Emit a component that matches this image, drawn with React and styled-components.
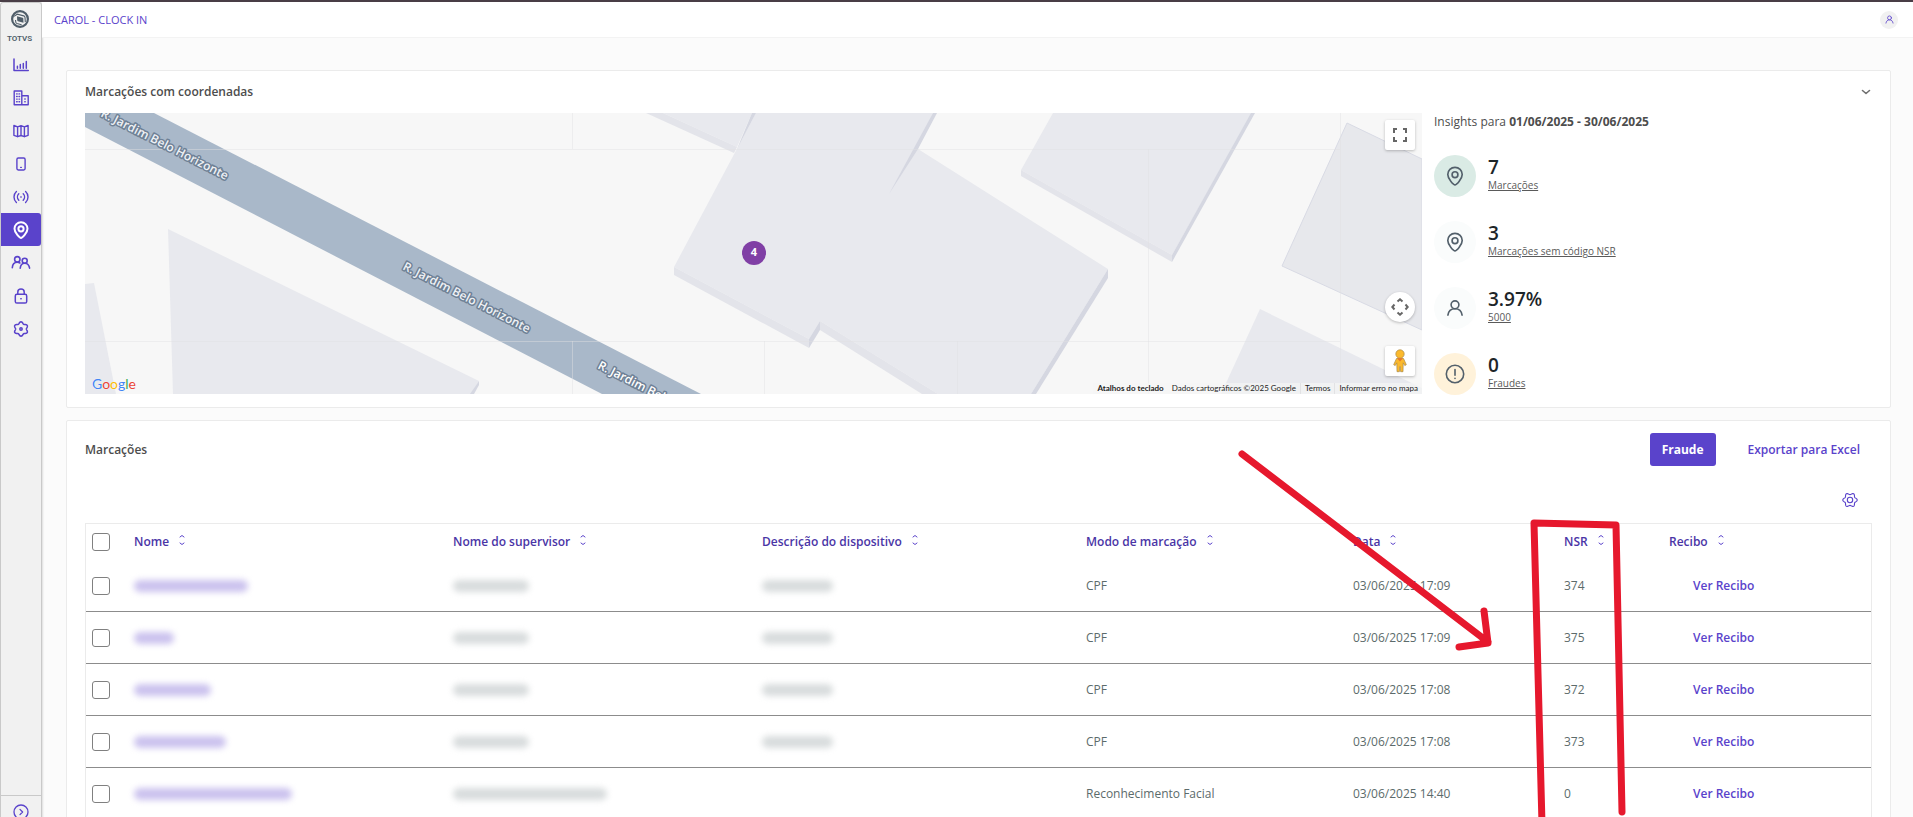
import React, { useState } from 'react'
import styled, { createGlobalStyle } from 'styled-components'

const GlobalStyle = createGlobalStyle`
  :root {
    --color-primary: #5a43cb;
    --color-primary-dark: #4a35a6;
    --color-text: #4d4d4d;
    --color-cell: #5c6b6b;
    --color-icon: #53606b;
    --color-border: #ebebeb;
  }
  * {
    box-sizing: border-box;
  }
  body {
    margin: 0;
    background: #fbfbfb;
    color: var(--color-text);
    font-family: 'Open Sans', 'Noto Sans', sans-serif;
    font-size: 12px;
    line-height: 16px;
    overflow: hidden;
  }
  button {
    font: inherit;
    padding: 0;
    border: 0;
    background: none;
    cursor: pointer;
  }
`

/* gear outline with six soft teeth */
const gearPath = (cx, cy, radius, depth, turn) => {
  const points = []
  for (let i = 0; i < 72; i++) {
    const a = (i / 72) * Math.PI * 2
    const r = radius + depth * Math.cos(6 * (a - turn))
    points.push(`${(cx + r * Math.cos(a)).toFixed(2)} ${(cy + r * Math.sin(a)).toFixed(2)}`)
  }
  return `M${points.join('L')}z`
}

const Icon = ({ size = 16, box = 16, stroke = 1.5, children }) => (
  <svg
    width={size}
    height={size}
    viewBox={`0 0 ${box} ${box}`}
    fill="none"
    stroke="currentColor"
    strokeWidth={stroke}
    strokeLinecap="round"
    strokeLinejoin="round"
    aria-hidden="true"
  >
    {children}
  </svg>
)

const ChartIcon = () => (
  <Icon>
    <path d="M1 2v11.500h14.300M4.400 9.200v2M7.300 7.600v3.600M10.300 6.600v4.600M13.300 4.400v6.800" />
  </Icon>
)

const CompanyIcon = () => (
  <Icon stroke={1.4}>
    <path d="M1.2 1h7.600v13.800H1.2zM8.800 5.800h6.400v9H8.800z" />
    <path d="M3.600 3.900h.6M6 3.900h.6M3.600 6.500h.6M6 6.500h.6M3.600 9.100h.6M6 9.100h.6M3.600 11.700h.6M6 11.700h.6M11.800 9h.4M11.800 11.800h.4" />
  </Icon>
)

const MapIcon = () => (
  <Icon stroke={1.4}>
    <path d="M.9 2.500 4.600 3.900 8 2.700l3.400 1.200 3.700-1.400v9.800l-3.700 1.400L8 12.500l-3.400 1.200-3.700-1.400zM4.600 3.900v9.800M8 2.700v9.800M11.400 3.900v9.800" />
  </Icon>
)

const DeviceIcon = () => (
  <Icon stroke={1.4}>
    <rect x="3.900" y="2" width="8.200" height="12" rx="1.400" />
    <path d="M7.700 11.400h.6" />
  </Icon>
)

const SignalIcon = () => (
  <Icon stroke={1.4}>
    <path d="M3.400 2.600C.2 5.600.2 10.400 3.400 13.400M12.600 2.600c3.200 3 3.200 7.800 0 10.800M5.800 4.800c-1.800 1.800-1.800 4.600 0 6.400M10.200 4.800c1.800 1.800 1.800 4.600 0 6.400M7.800 8h.4" />
  </Icon>
)

const PinIcon = ({ size = 18, stroke = 2 }) => (
  <Icon size={size} box={18} stroke={stroke}>
    <path d="M9 17c-1.100 0-6.500-5.200-6.500-9.300a6.500 6.500 0 0 1 13 0C15.500 11.800 10.100 17 9 17z" />
    <circle cx="9" cy="7.800" r="2.600" />
  </Icon>
)

const UsersIcon = () => (
  <Icon size={20} box={20} stroke={1.6}>
    <circle cx="6.300" cy="6.300" r="2.700" />
    <path d="M1.300 14.800c.2-3.500 2.200-5.600 5-5.600 1 0 1.900.3 2.600.8" />
    <circle cx="13.700" cy="7.800" r="2.500" />
    <path d="M9.200 15.200c.3-3.200 2.100-5 4.500-5s4.400 1.800 4.900 5" />
  </Icon>
)

const LockIcon = () => (
  <Icon>
    <rect x="2.300" y="6.300" width="11.400" height="8.700" rx="1.600" />
    <path d="M4.800 6.200V4a3.200 3 0 0 1 6.400 0v2.200M7.800 10.700h.4" />
  </Icon>
)

const GearIcon = ({ turn = 0, hole = 1.2, stroke = 1.5 }) => (
  <Icon stroke={stroke}>
    <path d={gearPath(8, 8, 6.3, 0.9, turn)} />
    <circle cx="8" cy="8" r={hole} />
  </Icon>
)

const UserIcon = ({ size = 18 }) => (
  <Icon size={size} box={18} stroke={1.6}>
    <circle cx="9" cy="5.800" r="3.900" />
    <path d="M1.900 16.200c.5-4 3.200-6.500 7.100-6.500s6.600 2.500 7.100 6.500" />
  </Icon>
)

const AlertIcon = () => (
  <Icon size={20} box={20} stroke={1.6}>
    <circle cx="10" cy="10" r="8.700" />
    <path d="M10 5.500v5.800M10 14.300v.1" />
  </Icon>
)

const ExpandIcon = () => (
  <Icon stroke={1.3}>
    <circle cx="8" cy="8" r="7" />
    <path d="m7 5.400 2.600 2.600L7 10.600" />
  </Icon>
)

const TotvsLogo = () => (
  <svg width="20" height="20" viewBox="0 0 20 20" aria-hidden="true">
    <circle cx="10" cy="10" r="7.900" fill="none" stroke="#4f5d69" strokeWidth="2.200" />
    <path d="m7 7.200 5.600 1.500c.4.100.7.400.7.900l.2 4.100-5.600-1.500c-.4-.1-.7-.4-.7-.9z" fill="#4f5d69" />
    <path d="M4 7.400 7.200 5.200l6.600 1.700c.7.200 1.100.7 1.200 1.400l.3 4.800" fill="none" stroke="#4f5d69" strokeWidth="1.100" />
    <path d="m5.500 11 .3 2.200c.1.700.5 1.100 1.200 1.300l4.600 1.200" fill="none" stroke="#4f5d69" strokeWidth="1.100" />
  </svg>
)

const menu = [
  { label: 'Dashboard', icon: <ChartIcon /> },
  { label: 'Empresas', icon: <CompanyIcon /> },
  { label: 'Locais', icon: <MapIcon /> },
  { label: 'Dispositivos', icon: <DeviceIcon /> },
  { label: 'Sinal', icon: <SignalIcon /> },
  { label: 'Marcações', icon: <PinIcon />, active: true },
  { label: 'Pessoas', icon: <UsersIcon /> },
  { label: 'Segurança', icon: <LockIcon /> },
  { label: 'Configurações', icon: <GearIcon turn={Math.PI / 6} /> },
]

const insights = [
  { value: '7', label: 'Marcações', icon: <PinIcon size={20} stroke={1.5} />, color: '#daebe5' },
  { value: '3', label: 'Marcações sem código NSR', icon: <PinIcon size={20} stroke={1.5} />, color: '#fafcfc' },
  { value: '3.97%', label: '5000', icon: <UserIcon />, color: '#fafcfc' },
  { value: '0', label: 'Fraudes', icon: <AlertIcon />, color: '#fff2da' },
]

/* widths share the table in proportion */
const columns = [
  { label: 'Nome', width: 319 },
  { label: 'Nome do supervisor', width: 309 },
  { label: 'Descrição do dispositivo', width: 324 },
  { label: 'Modo de marcação', width: 267 },
  { label: 'Data', width: 211 },
  { label: 'NSR', width: 105 },
  { label: 'Recibo', width: 210 },
]

/* name, supervisor and device are masked: only their length is kept */
const rows = [
  { id: 1, name: 114, supervisor: 76, device: 71, mode: 'CPF', date: '03/06/2025 17:09', nsr: 374 },
  { id: 2, name: 40, supervisor: 76, device: 71, mode: 'CPF', date: '03/06/2025 17:09', nsr: 375 },
  { id: 3, name: 77, supervisor: 76, device: 71, mode: 'CPF', date: '03/06/2025 17:08', nsr: 372 },
  { id: 4, name: 92, supervisor: 76, device: 71, mode: 'CPF', date: '03/06/2025 17:08', nsr: 373 },
  { id: 5, name: 158, supervisor: 154, device: 0, mode: 'Reconhecimento Facial', date: '03/06/2025 14:40', nsr: 0 },
]

const streets = [
  { x: 15, y: 3, fill: '#eef1f5' },
  { x: 317, y: 156, fill: '#eef1f5' },
  { x: 512, y: 255, fill: '#ffffff' },
]

const MapDrawing = () => (
  <MapSvg viewBox="0 0 1337 281" preserveAspectRatio="xMidYMid slice">
    <g fill="#e8e9ee">
      <path d="M0 171l9-1 22 111H0z" />
      <path d="M83 116 394 268l-8 13H88z" />
      <path d="M578 0h89l-15 34z" />
      <path d="M671 0h177l-15 36 190 120-77 125h-93L735 208l-11 18-135-72z" />
      <path d="M968 0h199l-80 142L936 57z" />
      <path d="M1175 196 1337 275v6h-201z" />
    </g>
    <path d="M1262 10l75 36v171l-140-64z" fill="#e7e8ec" stroke="#d8dae4" />
    <g fill="#e3e4ea">
      <path d="M561 0h17l74 34-3 6z" />
      <path d="M589 154l135 72v9l-135-73z" />
      <path d="M735 208l118 73h-16l-102-64z" />
      <path d="M936 57l151 85v7L936 63z" />
    </g>
    <g fill="#d5d7e1">
      <path d="M394 268v4l-5 9h-4z" />
      <path d="M667 0h4l-19 36z" />
      <path d="M848 0h4l-19 36-29 45z" />
      <path d="M724 226l11-18v9l-11 18z" />
      <path d="M1023 156v9l-72 116h-5z" />
      <path d="M1087 142v7l83-149h-4z" />
    </g>
    <path d="M0 0h69l547 281h-99L0 14z" fill="#a9b8c9" />
    <path
      d="M0 36.500h1255M0 228.500h1255M487.500 0v36M487.500 228v53M679.500 228v53M872.500 228v53M1063.500 36v245M1255.500 0v281"
      stroke="#dfe0e2"
      strokeOpacity="0.450"
      fill="none"
    />
    {streets.map(({ x, y, fill }) => (
      <StreetName key={x} transform={`translate(${x} ${y}) rotate(27)`} fill={fill}>
        R. Jardim Belo Horizonte
      </StreetName>
    ))}
    <circle cx="669" cy="140" r="12" fill="#803fa5" />
    <ClusterCount x="669" y="143">4</ClusterCount>
  </MapSvg>
)

const Pegman = () => (
  <svg width="14" height="24" viewBox="0 0 14 24" aria-hidden="true">
    <path
      d="M3.500 9.500h7l2.800 6.200-1.500.9-1.600-2.800-.2 8.900H7.600l-.3-5h-.6l-.3 5H4l-.2-8.900-1.600 2.800-1.500-.9z"
      fill="#fbb92c"
      stroke="#a98a4a"
      strokeWidth="0.700"
    />
    <circle cx="7" cy="5" r="4.200" fill="#fbb92c" stroke="#a98a4a" strokeWidth="0.700" />
    <path d="M4 9.300h6l-3 3.300z" fill="#e8762c" />
  </svg>
)

const SortIcon = () => (
  <Icon size={10} box={10} stroke={1}>
    <path d="m3 2 2-1.500L7 2M3 8l2 1.500L7 8" />
  </Icon>
)

const Sidebar = () => (
  <SidebarStyled>
    <div className="brand">
      <TotvsLogo />
      <span>TOTVS</span>
    </div>
    <nav>
      {menu.map(({ label, icon, active }) => (
        <MenuLink key={label} href="#" aria-label={label} $active={active}>
          {icon}
        </MenuLink>
      ))}
    </nav>
    <ToggleButton aria-label="Expandir menu">
      <ExpandIcon />
    </ToggleButton>
  </SidebarStyled>
)

const CoordinatesCard = () => (
  <Card>
    <CardHeader>
      <h2>Marcações com coordenadas</h2>
      <ChevronButton aria-label="Recolher">
        <Icon size={12} box={12} stroke={1.6}>
          <path d="m2.500 4.500 3.500 3 3.500-3" />
        </Icon>
      </ChevronButton>
    </CardHeader>
    <CardContent>
      <MapStyled>
        <MapDrawing />
        <MapControls>
          <MapButton className="fullscreen" aria-label="Tela cheia">
            <svg width="14" height="14" viewBox="0 0 14 14" fill="none" stroke="#666" strokeWidth="2">
              <path d="M1 5V1h3M10 1h3v4M13 9v4h-3M4 13H1V9" />
            </svg>
          </MapButton>
          <MapButton $round aria-label="Controles da câmera">
            <svg width="18" height="18" viewBox="0 0 18 18" fill="none" stroke="#666" strokeWidth="2">
              <path d="M6.500 3.500 9 1.300l2.500 2.200M6.500 14.500 9 16.700l2.500-2.200M3.500 6.500 1.300 9l2.200 2.500M14.500 6.500 16.700 9l-2.200 2.500" />
            </svg>
          </MapButton>
          <MapButton aria-label="Street View">
            <Pegman />
          </MapButton>
        </MapControls>
        <GoogleLogo href="#" aria-label="Google">
          <span>G</span><span>o</span><span>o</span><span>g</span><span>l</span><span>e</span>
        </GoogleLogo>
        <Attribution>
          <button>Atalhos do teclado</button>
          <span>Dados cartográficos ©2025 Google</span>
          <a href="#">Termos</a>
          <a href="#">Informar erro no mapa</a>
        </Attribution>
      </MapStyled>
      <InsightsStyled>
        <p>Insights para <b>01/06/2025 - 30/06/2025</b></p>
        {insights.map(({ value, label, icon, color }) => (
          <Insight key={label}>
            <InsightIcon $color={color}>{icon}</InsightIcon>
            <div>
              <strong>{value}</strong>
              <a href="#">{label}</a>
            </div>
          </Insight>
        ))}
      </InsightsStyled>
    </CardContent>
  </Card>
)

const RecordsCard = () => {
  const [selected, setSelected] = useState([])

  const toggle = (id) => {
    setSelected(selected.includes(id) ? selected.filter((item) => item !== id) : [...selected, id])
  }

  const toggleAll = () => {
    setSelected(selected.length === rows.length ? [] : rows.map((row) => row.id))
  }

  return (
    <Card>
      <Toolbar>
        <h2>Marcações</h2>
        <PrimaryButton>Fraude</PrimaryButton>
        <LinkButton>Exportar para Excel</LinkButton>
      </Toolbar>
      <TableSettings>
        <button aria-label="Configurar colunas">
          <GearIcon hole={2.7} stroke={1.1} />
        </button>
      </TableSettings>
      <Table>
        <colgroup>
          <Col $width={40} />
          {columns.map(({ label, width }) => <Col key={label} $width={width} />)}
        </colgroup>
        <thead>
          <tr>
            <th>
              <Checkbox
                aria-label="Selecionar todas"
                checked={selected.length === rows.length}
                onChange={toggleAll}
              />
            </th>
            {columns.map(({ label }) => (
              <th key={label}>
                <SortButton>{label}<SortIcon /></SortButton>
              </th>
            ))}
          </tr>
        </thead>
        <tbody>
          {rows.map(({ id, name, supervisor, device, mode, date, nsr }) => (
            <tr key={id}>
              <td>
                <Checkbox
                  aria-label={`Selecionar marcação ${id}`}
                  checked={selected.includes(id)}
                  onChange={() => toggle(id)}
                />
              </td>
              <td><Masked $width={name} $color="#cbc2ee" /></td>
              <td><Masked $width={supervisor} $color="#d8dcdd" /></td>
              <td>{device > 0 && <Masked $width={device} $color="#d8dcdd" />}</td>
              <td>{mode}</td>
              <td>{date}</td>
              <td>{nsr}</td>
              <td><ReceiptButton>Ver Recibo</ReceiptButton></td>
            </tr>
          ))}
        </tbody>
      </Table>
    </Card>
  )
}

const App = () => {
  return (
    <AppStyled>
      <GlobalStyle />
      <Sidebar />
      <div className="page">
        <Header>
          <h1>CAROL - CLOCK IN</h1>
          <Avatar aria-label="Perfil">
            <UserIcon size={9} />
          </Avatar>
        </Header>
        <main>
          <CoordinatesCard />
          <RecordsCard />
        </main>
      </div>
      <Annotation viewBox="0 0 1913 817" preserveAspectRatio="none" aria-hidden="true">
        <path d="M1242 454 1488 642M1484 611l4 32-29 4" />
        <path d="M1542 824 1534 523l82 2 6 287" />
      </Annotation>
    </AppStyled>
  )
}

const AppStyled = styled.div`
  display: flex;
  height: 100vh;
  border-top: 2px solid #493d46;
  overflow: hidden;
  .page {
    flex: 1;
    min-width: 0;
  }
  main {
    display: flex;
    flex-direction: column;
    gap: 12px;
    padding: 32px 22px 0 24px;
  }
`;

const SidebarStyled = styled.aside`
  display: flex;
  flex-direction: column;
  flex-shrink: 0;
  width: 42px;
  height: calc(100vh + 10px);
  background: #f1f1f1;
  border: 1px solid #c9c9c9;
  border-radius: 3px;
  box-shadow: 1px 0 2px rgba(0, 0, 0, 0.12);
  .brand {
    display: flex;
    flex-direction: column;
    align-items: center;
    gap: 5px;
    height: 45px;
    padding: 6px 3px 0 0;
    color: #4f5d69;
    font-family: Roboto, sans-serif;
    font-size: 8px;
    font-weight: 600;
    line-height: 10px;
  }
  nav {
    flex: 1;
  }
`;

const MenuLink = styled.a`
  display: flex;
  align-items: center;
  justify-content: center;
  height: 33px;
  border-radius: 0 3px 3px 0;
  background: ${({ $active }) => ($active ? 'var(--color-primary)' : 'transparent')};
  color: ${({ $active }) => ($active ? '#ffffff' : 'var(--color-primary)')};
`;

const ToggleButton = styled.button`
  display: flex;
  align-items: center;
  justify-content: center;
  height: 33px;
  border-top: 1px solid #c9c9c9;
  color: var(--color-primary);
`;

const Header = styled.header`
  display: flex;
  align-items: center;
  justify-content: space-between;
  height: 36px;
  padding: 0 15px 0 12px;
  background: #ffffff;
  border-bottom: 1px solid #f3f3f3;
  h1 {
    margin: 0;
    color: var(--color-primary);
    font-size: 11px;
    font-weight: 400;
  }
`;

const Avatar = styled.button`
  display: flex;
  align-items: center;
  justify-content: center;
  width: 18px;
  height: 18px;
  border-radius: 50%;
  background: #f1f1f1;
  color: var(--color-primary);
`;

const Card = styled.section`
  padding: 0 18px 12px;
  background: #ffffff;
  border: 1px solid var(--color-border);
  border-radius: 2px;
  h2 {
    margin: 0;
    font-size: 12px;
    font-weight: 600;
  }
`;

const CardHeader = styled.div`
  display: flex;
  align-items: center;
  justify-content: space-between;
  height: 42px;
`;

const ChevronButton = styled.button`
  display: flex;
  color: #6f6f6f;
`;

const CardContent = styled.div`
  display: grid;
  grid-template-columns: minmax(0, 1fr) 438px;
  gap: 12px;
  align-items: start;
`;

const MapStyled = styled.div`
  position: relative;
  height: 281px;
  background: #f7f7f7;
  overflow: hidden;
`;

const MapSvg = styled.svg`
  display: block;
  width: 100%;
  height: 100%;
`;

const StreetName = styled.text`
  font-size: 12px;
  font-weight: 600;
  stroke: #6f8196;
  stroke-width: 3px;
  stroke-linejoin: round;
  paint-order: stroke;
`;

const ClusterCount = styled.text`
  fill: #ffffff;
  font-size: 11px;
  font-weight: 700;
  text-anchor: middle;
`;

const MapControls = styled.div`
  position: absolute;
  top: 7px;
  right: 7px;
  bottom: 18px;
  display: flex;
  flex-direction: column;
  gap: 24px;
  .fullscreen {
    margin-bottom: auto;
  }
`;

const MapButton = styled.button`
  display: flex;
  align-items: center;
  justify-content: center;
  width: 30px;
  height: 30px;
  border-radius: ${({ $round }) => ($round ? '50%' : '2px')};
  background: #ffffff;
  box-shadow: 0 1px 3px rgba(0, 0, 0, 0.25);
`;

const GoogleLogo = styled.a`
  position: absolute;
  left: 7px;
  bottom: 1px;
  color: #4285f4;
  font-family: Lato, sans-serif;
  font-size: 14px;
  line-height: 18px;
  text-decoration: none;
  text-shadow: 0 0 1px #ffffff;
  span:nth-child(2), span:nth-child(6) {
    color: #ea4335;
  }
  span:nth-child(3) {
    color: #fbbc05;
  }
  span:nth-child(5) {
    color: #34a853;
  }
`;

const Attribution = styled.div`
  position: absolute;
  right: 0;
  bottom: 0;
  display: flex;
  color: #222222;
  font-family: Lato, sans-serif;
  font-size: 8px;
  line-height: 11px;
  > * {
    padding: 0 4px;
    background: rgba(245, 245, 245, 0.7);
    color: inherit;
    text-decoration: none;
  }
  button {
    font-weight: 700;
  }
  a {
    border-left: 1px solid #e2e2e4;
  }
`;

const InsightsStyled = styled.div`
  display: flex;
  flex-direction: column;
  gap: 24px;
  p {
    margin: 1px 0;
  }
  b {
    font-weight: 700;
  }
`;

const Insight = styled.div`
  display: flex;
  gap: 12px;
  strong {
    display: block;
    color: #1d2529;
    font-size: 19px;
    font-weight: 600;
    line-height: 24px;
  }
  a {
    display: block;
    color: #5a5a5a;
    font-size: 10px;
    line-height: 12px;
    text-underline-offset: 1px;
  }
`;

const InsightIcon = styled.span`
  display: flex;
  align-items: center;
  justify-content: center;
  width: 42px;
  height: 42px;
  border-radius: 50%;
  background: ${({ $color }) => $color};
  color: var(--color-icon);
`;

const Toolbar = styled.div`
  display: flex;
  align-items: center;
  padding-top: 12px;
  h2 {
    flex: 1;
  }
`;

const PrimaryButton = styled.button`
  height: 33px;
  padding: 0 12px;
  border-radius: 3px;
  background: var(--color-primary);
  color: #ffffff;
  font-weight: 700;
`;

const LinkButton = styled.button`
  height: 33px;
  padding: 0 12px 0 32px;
  color: var(--color-primary);
  font-weight: 600;
`;

const TableSettings = styled.div`
  display: flex;
  justify-content: flex-end;
  padding: 26px 14px 15px;
  button {
    display: flex;
    color: var(--color-primary);
  }
`;

const Table = styled.table`
  width: 100%;
  table-layout: fixed;
  border: 1px solid var(--color-border);
  border-spacing: 0;
  th, td {
    padding: 0 8px;
    text-align: left;
    white-space: nowrap;
  }
  th {
    height: 36px;
    color: var(--color-primary-dark);
    font-weight: 600;
  }
  td {
    height: 52px;
    border-bottom: 1px solid #8c8c8c;
    color: var(--color-cell);
  }
  th:first-child, td:first-child {
    padding: 0 6px;
  }
`;

const Col = styled.col`
  width: ${({ $width }) => $width}px;
`;

const Checkbox = styled.input.attrs({ type: 'checkbox' })`
  display: block;
  appearance: none;
  width: 18px;
  height: 18px;
  margin: 0;
  border: 1px solid #808080;
  border-radius: 3px;
  background: #ffffff;
  &:checked {
    background: var(--color-primary);
  }
`;

const SortButton = styled.button`
  display: flex;
  align-items: center;
  gap: 8px;
  color: inherit;
  svg {
    margin-bottom: 4px;
    color: var(--color-primary);
  }
`;

const Masked = styled.span`
  display: block;
  width: ${({ $width }) => $width}px;
  height: 12px;
  border-radius: 6px;
  background: ${({ $color }) => $color};
  filter: blur(3px);
`;

const ReceiptButton = styled.button`
  padding: 0 24px;
  color: var(--color-primary);
  font-weight: 600;
`;

/* hand-drawn arrow and frame around the NSR column */
const Annotation = styled.svg`
  position: fixed;
  inset: 0;
  width: 100%;
  height: 100%;
  pointer-events: none;
  fill: none;
  stroke: #e6182d;
  stroke-width: 7px;
  stroke-linecap: round;
  stroke-linejoin: round;
`;

export default App
